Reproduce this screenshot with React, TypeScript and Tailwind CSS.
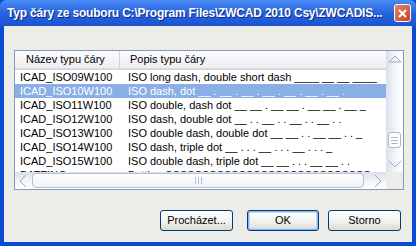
import React from "react";

type Row = { name: string; desc: string };

const rows: Row[] = [
  { name: "ICAD_ISO09W100", desc: "ISO long dash, double short dash ____ __ __ ____" },
  { name: "ICAD_ISO10W100", desc: "ISO dash, dot __ . __ . __ . __ . __ . __ . __ ." },
  { name: "ICAD_ISO11W100", desc: "ISO double, dash dot __ __ . __ __ . __ __ . __ _" },
  { name: "ICAD_ISO12W100", desc: "ISO dash, double dot __ . . __ . . __ . . __ . ." },
  { name: "ICAD_ISO13W100", desc: "ISO double dash, double dot __ __ . . __ __ . . _" },
  { name: "ICAD_ISO14W100", desc: "ISO dash, triple dot __ . . . __ . . . __ . . . _" },
  { name: "ICAD_ISO15W100", desc: "ISO double dash, triple dot __ __ . . . __ __ . ." },
  { name: "BATTING", desc: "Batting SSSSSSSSSSSSSSSSSSSSSSSSSSSS" },
];

const font = { fontFamily: '"Liberation Sans", Arial, sans-serif' };

function XpButton({ label, focused }: { label: string; focused?: boolean }) {
  return (
    <button
      className={
        "h-[21px] rounded-[3px] border border-[#003C74] bg-gradient-to-b from-white via-[#F4F4F0] to-[#DCDCD6] text-[11px] font-normal text-black " +
        (focused ? "w-[72px] shadow-[inset_0_0_0_1px_#8CB4F2,inset_0_0_0_2px_#C2D8F8]" : "w-[73px]")
      }
      style={font}
    >
      {label}
    </button>
  );
}

function Chevron({ dir }: { dir: "up" | "down" | "left" | "right" }) {
  const pts = {
    up: "2,10 8,4 14,10 2,10",
    down: "2,5 8,11 14,5",
    left: "10,2 4,8 10,14",
    right: "5,2 11,8 5,14",
  }[dir];
  return (
    <svg width="16" height="16" viewBox="0 0 16 16">
      <polyline points={pts} fill="none" stroke="#9AA9C2" strokeWidth="1" />
    </svg>
  );
}

export default function App() {
  return (
    <div className="w-[416px] h-[246px] flex flex-col bg-[#0B4CD6]" style={font}>
      {/* title bar */}
      <div className="h-[26px] flex items-center pl-[7px] pr-[5px] bg-gradient-to-b from-[#4A8CF5] via-[#2763DE] to-[#1C54D2] rounded-t-[6px]">
        <span className="flex-1 text-[12px] tracking-[-0.2px] font-bold text-white whitespace-nowrap [text-shadow:1px_1px_0_#0A2A8A]">
          Typ čáry ze souboru C:\Program Files\ZWCAD 2010 Csy\ZWCADIS...
        </span>
        <div className="w-[17px] h-[18px] rounded-[3px] border border-white bg-gradient-to-br from-[#E9836A] to-[#C2412A] flex items-center justify-center">
          <svg width="9" height="9" viewBox="0 0 9 9">
            <path d="M1 1 L8 8 M8 1 L1 8" stroke="white" strokeWidth="2" />
          </svg>
        </div>
      </div>

      {/* body */}
      <div className="flex-1 mx-[4px] mb-[4px] bg-[#ECECE8] flex flex-col">
        <div className="mt-[24px] ml-[10px] mr-[8px] h-[140px] border border-[#7F9DB9] bg-white grid grid-cols-[1fr_17px] grid-rows-[1fr_17px] overflow-hidden">
          {/* list content */}
          <div className="overflow-hidden flex flex-col text-[11px] text-black">
            <div className="h-[19px] shrink-0 flex items-center bg-gradient-to-b from-[#FBFBFD] to-[#EFEFF2] border-b-2 border-[#D7D7DC]">
              <div className="w-[105px] h-full flex items-center pl-[11px] border-r border-[#D4D4D8]">Název typu čáry</div>
              <div className="pl-[10px]">Popis typu čáry</div>
            </div>
            {rows.map((r, i) => (
              <div
                key={r.name}
                className={
                  "h-[14px] shrink-0 flex items-center whitespace-nowrap " +
                  (i === 1 ? "bg-[#8AAFE6] text-white" : "")
                }
              >
                <div className="w-[108px] shrink-0 pl-[5px]">{r.name}</div>
                <div className="pl-[5px]">{r.desc}</div>
              </div>
            ))}
          </div>

          {/* vertical scrollbar */}
          <div className="flex flex-col bg-gradient-to-r from-[#D9E0EC] via-[#F1F4F9] to-white">
            <div className="h-[17px] flex items-center justify-center">
              <Chevron dir="up" />
            </div>
            <div className="flex-1 flex flex-col">
              <div className="h-[58px]" />
              <div className="h-[28px] mx-[1px] flex items-center justify-center">
                <div className="w-[13px] h-[16px] rounded-[3px] border border-[#A8B6CC] bg-white flex flex-col justify-center gap-[2px] px-[2px]">
                  <div className="h-px bg-[#A8B6CC]" />
                  <div className="h-px bg-[#A8B6CC]" />
                  <div className="h-px bg-[#A8B6CC]" />
                </div>
              </div>
            </div>
            <div className="h-[17px] flex items-center justify-center">
              <Chevron dir="down" />
            </div>
          </div>

          {/* horizontal scrollbar */}
          <div className="flex bg-gradient-to-b from-[#D9E0EC] via-[#F1F4F9] to-white">
            <div className="w-[17px] flex items-center justify-center">
              <Chevron dir="left" />
            </div>
            <div className="flex-1 flex items-center pr-[5px]">
              <div className="flex-1 h-[15px] rounded-[4px] border border-[#B4C0D4] bg-gradient-to-b from-white to-[#EEF2F8] flex items-center justify-center">
                <div className="flex gap-[2px]">
                  <div className="w-px h-[7px] bg-[#B4C0D4]" />
                  <div className="w-px h-[7px] bg-[#B4C0D4]" />
                  <div className="w-px h-[7px] bg-[#B4C0D4]" />
                </div>
              </div>
            </div>
            <div className="w-[17px] flex items-center justify-center">
              <Chevron dir="right" />
            </div>
          </div>
          <div className="bg-[#ECECE8]" />
        </div>

        {/* buttons */}
        <div className="mt-[20px] flex justify-end pr-[11px]">
          <XpButton label="Procházet..." />
          <div className="w-[14px]" />
          <XpButton label="OK" focused />
          <div className="w-[9px]" />
          <XpButton label="Storno" />
        </div>
      </div>
    </div>
  );
}
